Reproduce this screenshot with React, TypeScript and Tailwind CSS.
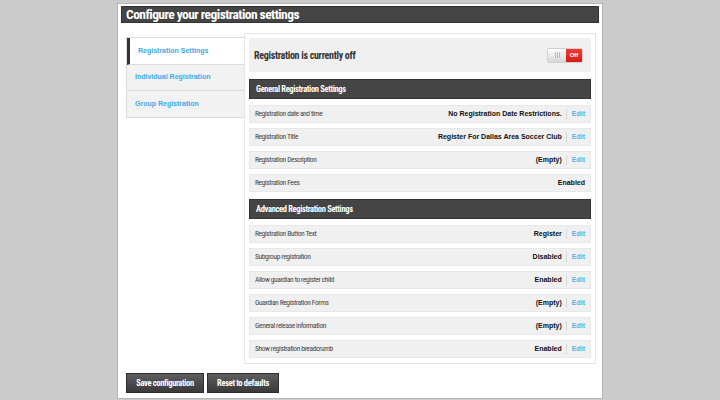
import React from "react";

const narrow = "font-['Roboto_Condensed','Roboto',sans-serif] font-stretch-condensed";
const arial = "font-['Liberation_Sans',Arial,sans-serif]";

type Row = { label: string; value: string; edit: boolean };

const general: Row[] = [
  { label: "Registration date and time", value: "No Registration Date Restrictions.", edit: true },
  { label: "Registration Title", value: "Register For Dallas Area Soccer Club", edit: true },
  { label: "Registration Description", value: "(Empty)", edit: true },
  { label: "Registration Fees", value: "Enabled", edit: false },
];

const advanced: Row[] = [
  { label: "Registration Button Text", value: "Register", edit: true },
  { label: "Subgroup registration", value: "Disabled", edit: true },
  { label: "Allow guardian to register child", value: "Enabled", edit: true },
  { label: "Guardian Registration Forms", value: "(Empty)", edit: true },
  { label: "General release information", value: "(Empty)", edit: true },
  { label: "Show registration breadcrumb", value: "Enabled", edit: true },
];

function SettingRow({ r }: { r: Row }) {
  return (
    <div className="h-[18px] bg-[#f0f0f0] border border-[#e8e8e8] flex items-center pl-[5px] pr-[5px]">
      <span className={`${narrow} text-[7.5px] tracking-[-0.4px] text-[#444] flex-1`}>{r.label}</span>
      <span className={`${arial} text-[7px] font-bold text-[#111]`}>{r.value}</span>
      {r.edit && (
        <>
          <span className="w-px h-[10px] bg-[#d8d8d8] ml-[4px] mr-[5px]" />
          <span className={`${arial} text-[7px] font-bold text-[#4fb3ec]`}>Edit</span>
        </>
      )}
    </div>
  );
}

function SectionHeader({ title }: { title: string }) {
  return (
    <div className="h-[20px] bg-[#454545] border border-[#333] flex items-center pl-[6px]">
      <span className={`${narrow} text-[8.5px] tracking-[-0.35px] font-bold text-white`}>{title}</span>
    </div>
  );
}

export default function App() {
  return (
    <div className="w-[720px] h-[400px] bg-[#cbcbcb] overflow-hidden">
      <div className="ml-[117px] mt-[3px] w-[486px] h-[396px] bg-white border border-[#b5b5b5] px-[3px] pt-[2px]">
        <div className="h-[17px] bg-[#444] border border-[#333] flex items-center pl-[4px]">
          <span className={`${narrow} text-[13.5px] tracking-[-0.55px] font-bold text-white leading-none`}>
            Configure your registration settings
          </span>
        </div>
        <div className="flex mt-[10px] pl-[5px]">
          <div className="w-[118px] mt-[4px] self-start border border-[#dcdcdc] border-r-0">
            <div className="h-[27px] bg-white border-l-[3px] border-[#333] border-b border-b-[#dcdcdc] flex items-center pl-[8px]">
              <span className={`${arial} text-[7px] font-bold text-[#3ea9ee]`}>Registration Settings</span>
            </div>
            <div className="h-[26px] bg-[#f2f2f2] border-b border-[#dcdcdc] flex items-center pl-[8px]">
              <span className={`${arial} text-[7px] font-bold text-[#3ea9ee]`}>Individual Registration</span>
            </div>
            <div className="h-[26px] bg-[#f2f2f2] flex items-center pl-[8px]">
              <span className={`${arial} text-[7px] font-bold text-[#3ea9ee]`}>Group Registration</span>
            </div>
          </div>
          <div className="w-[352px] border border-[#e6e6e6] bg-white p-[4px] pb-[5px]">
            <div className="h-[34px] bg-[#f0f0f0] flex items-center pl-[5px] pr-[8px]">
              <span className={`${narrow} text-[10px] tracking-[-0.3px] font-bold text-[#333] flex-1`}>Registration is currently off</span>
              <div className="flex h-[15px] w-[36px] border border-[#d0d0d0] rounded-[2px] overflow-hidden">
                <div className="w-[18px] bg-gradient-to-b from-white to-[#d6d6d6] flex items-center justify-center gap-[1px]">
                  <span className="w-px h-[6px] bg-[#bbb]" />
                  <span className="w-px h-[6px] bg-[#bbb]" />
                  <span className="w-px h-[6px] bg-[#bbb]" />
                </div>
                <div className="flex-1 bg-gradient-to-b from-[#f03a30] to-[#d81a12] flex items-center justify-center">
                  <span className={`${arial} text-[6px] font-bold text-white`}>Off</span>
                </div>
              </div>
            </div>
            <div className="mt-[7px]">
              <SectionHeader title="General Registration Settings" />
            </div>
            <div className="flex flex-col gap-[5px] mt-[6px]">
              {general.map((r) => (
                <SettingRow key={r.label} r={r} />
              ))}
            </div>
            <div className="mt-[7px]">
              <SectionHeader title="Advanced Registration Settings" />
            </div>
            <div className="flex flex-col gap-[5px] mt-[6px]">
              {advanced.map((r) => (
                <SettingRow key={r.label} r={r} />
              ))}
            </div>
          </div>
        </div>
        <div className="flex gap-[3px] mt-[9px] pl-[5px]">
          <button className={`${narrow} h-[20px] w-[78px] bg-gradient-to-b from-[#5e5e5e] to-[#3a3a3a] border border-[#2e2e2e] text-white text-[8.5px] tracking-[-0.35px] font-bold`}>
            Save configuration
          </button>
          <button className={`${narrow} h-[20px] w-[72px] bg-gradient-to-b from-[#5e5e5e] to-[#3a3a3a] border border-[#2e2e2e] text-white text-[8.5px] tracking-[-0.35px] font-bold`}>
            Reset to defaults
          </button>
        </div>
      </div>
    </div>
  );
}
